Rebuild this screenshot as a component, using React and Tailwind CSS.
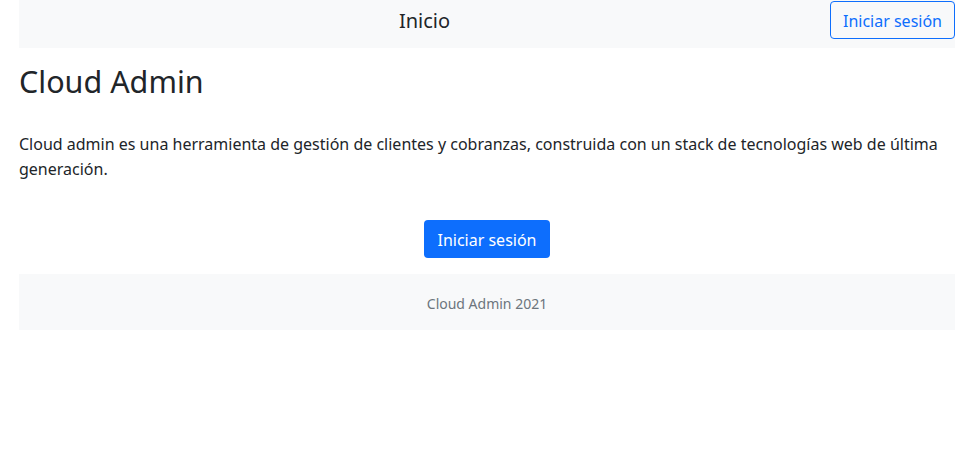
import React from 'react';

const font = { fontFamily: '"Noto Sans", "Open Sans", sans-serif' };

export default function App() {
  return (
    <div className="min-h-screen bg-white text-[#212529]" style={font}>
      <div className="ml-[19px] w-[936px]">
        {/* cabecera */}
        <header className="flex items-start h-[48px] bg-[#f8f9fa]">
          <div className="flex-1 flex justify-center pt-[6px] text-[20px] leading-[30px]">
            Inicio
          </div>
          <button className="h-[38px] mt-px pt-px px-3 border border-[#0d6efd] text-[#0d6efd] rounded-[4px] text-[16px] leading-6">
            Iniciar sesión
          </button>
        </header>

        <h1 className="mt-[15px] text-[30.5px] leading-[37px] font-normal">Cloud Admin</h1>

        <p className="mt-[32px] text-[16px] leading-[25px]">
          Cloud admin es una herramienta de gestión de clientes y cobranzas, construida con un stack de tecnologías web de última generación.
        </p>

        <div className="flex justify-center mt-[38px]">
          <button className="h-[38px] pt-px px-[13px] bg-[#0d6efd] text-white rounded-[4px] text-[16px] leading-6">
            Iniciar sesión
          </button>
        </div>

        <footer className="mt-4 h-[56px] pt-[3px] bg-[#f8f9fa] flex items-center justify-center text-[14px] text-[#6c757d]">
          Cloud Admin 2021
        </footer>
      </div>
    </div>
  );
}
